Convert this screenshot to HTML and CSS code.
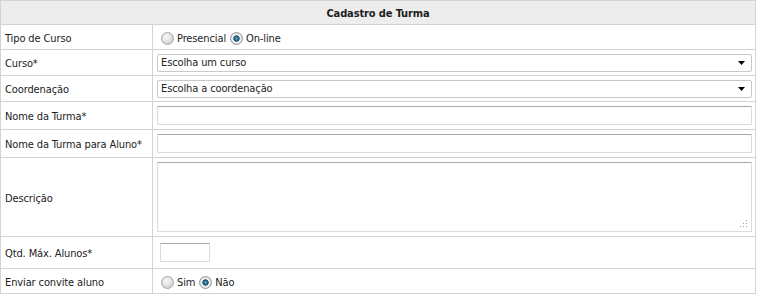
FILE: index.html
```html
<!DOCTYPE html>
<html lang="pt">
<head>
<meta charset="utf-8">
<title>Cadastro de Turma</title>
<link rel="stylesheet" href="styles.css">
</head>
<body>
<table class="form">
  <tr class="r-head"><th colspan="2"><span class="t">Cadastro de Turma</span></th></tr>
  <tr class="r-25">
    <td class="lbl"><span class="t">Tipo de Curso</span></td>
    <td class="fld">
      <span class="radios">
        <span class="radio"></span><span class="rlabel">Presencial</span>
        <span class="radio on"></span><span class="rlabel">On-line</span>
      </span>
    </td>
  </tr>
  <tr class="r-26">
    <td class="lbl"><span class="t">Curso*</span></td>
    <td class="fld"><div class="select"><span>Escolha um curso</span><svg class="arrow" width="7" height="4" viewBox="0 0 7 4"><path d="M0 0H7L3.5 4Z" fill="#000"/></svg></div></td>
  </tr>
  <tr class="r-26">
    <td class="lbl"><span class="t">Coordenação</span></td>
    <td class="fld"><div class="select"><span>Escolha a coordenação</span><svg class="arrow" width="7" height="4" viewBox="0 0 7 4"><path d="M0 0H7L3.5 4Z" fill="#000"/></svg></div></td>
  </tr>
  <tr class="r-28">
    <td class="lbl"><span class="t">Nome da Turma*</span></td>
    <td class="fld"><div class="text"></div></td>
  </tr>
  <tr class="r-28">
    <td class="lbl"><span class="t">Nome da Turma para Aluno*</span></td>
    <td class="fld"><div class="text"></div></td>
  </tr>
  <tr class="r-79">
    <td class="lbl"><span class="t">Descrição</span></td>
    <td class="fld"><div class="textarea"><svg class="grip" width="8" height="8" viewBox="0 0 8 8"><g fill="#9a9a9a"><rect x="6" y="0" width="1" height="1"/><rect x="6" y="3" width="1" height="1"/><rect x="3" y="3" width="1" height="1"/><rect x="6" y="6" width="1" height="1"/><rect x="3" y="6" width="1" height="1"/><rect x="0" y="6" width="1" height="1"/></g></svg></div></td>
  </tr>
  <tr class="r-32">
    <td class="lbl"><span class="t">Qtd. Máx. Alunos*</span></td>
    <td class="fld"><div class="small"></div></td>
  </tr>
  <tr class="r-25">
    <td class="lbl"><span class="t">Enviar convite aluno</span></td>
    <td class="fld">
      <span class="radios">
        <span class="radio"></span><span class="rlabel">Sim</span>
        <span class="radio on"></span><span class="rlabel">Não</span>
      </span>
    </td>
  </tr>
</table>
</body>
</html>
```

FILE: styles.css
```css
html, body {
  margin: 0;
  padding: 0;
  background: #ffffff;
}

body {
  font-family: "DejaVu Sans Condensed", "DejaVu Sans", sans-serif;
  font-size: 11px;
  letter-spacing: -0.12px;
  color: #222;
}

.form {
  border-collapse: collapse;
  width: 756px;
  border: 1px solid #d3d3d3;
}

.form th,
.form td {
  border: 1px solid #d3d3d3;
  padding: 0;
  vertical-align: middle;
}

.form th {
  background: #ededed;
  font-weight: bold;
  text-align: center;
  height: 23px;
  color: #1e1e1e;
}

.t {
  display: block;
  padding-top: 2px;
}

.lbl {
  width: 147px;
  padding-left: 4px !important;
  white-space: nowrap;
}

.fld {
  padding: 0 3px 0 4px !important;
}

.r-25 td { height: 24px; }
.r-26 td { height: 25px; }
.r-28 td { height: 27px; }
.r-79 td { height: 78px; }
.r-32 td { height: 31px; }

.radios {
  display: flex;
  align-items: center;
  padding-left: 4px;
  padding-top: 2px;
}

.radio {
  width: 11px;
  height: 11px;
  border-radius: 50%;
  border: 1px solid #a8a8a8;
  background: radial-gradient(circle at 40% 35%, #fafafa 0%, #e2e2e2 45%, #c4c4c4 100%);
  box-sizing: content-box;
  display: inline-block;
}

.radio.on {
  background: radial-gradient(circle at 50% 50%, #6fb3d0 0%, #2a6f92 20%, #1b4f6c 36%, #f4f4f4 46%, #dcdcdc 70%, #c2c2c2 100%);
  border-color: #9a9a9a;
}

.rlabel {
  margin-left: 3px;
  margin-right: 4px;
}

.select {
  display: flex;
  align-items: center;
  justify-content: space-between;
  height: 16px;
  border: 1px solid #c8c8c8;
  border-radius: 2px;
  padding: 0 6px 0 3px;
  background: #fff;
}

.arrow {
  display: block;
}

.text {
  height: 17px;
  border: 1px solid #dcdcdc;
  border-top-color: #a9a9a9;
  border-radius: 1px;
  background: #fff;
}

.textarea {
  position: relative;
  height: 68px;
  border: 1px solid #dcdcdc;
  border-top-color: #a9a9a9;
  border-radius: 1px;
  background: #fff;
}

.grip {
  position: absolute;
  right: 3px;
  bottom: 3px;
}

.small {
  width: 48px;
  height: 17px;
  margin-left: 3px;
  border: 1px solid #dcdcdc;
  border-top-color: #a9a9a9;
  border-radius: 1px;
  background: #fff;
}
```
